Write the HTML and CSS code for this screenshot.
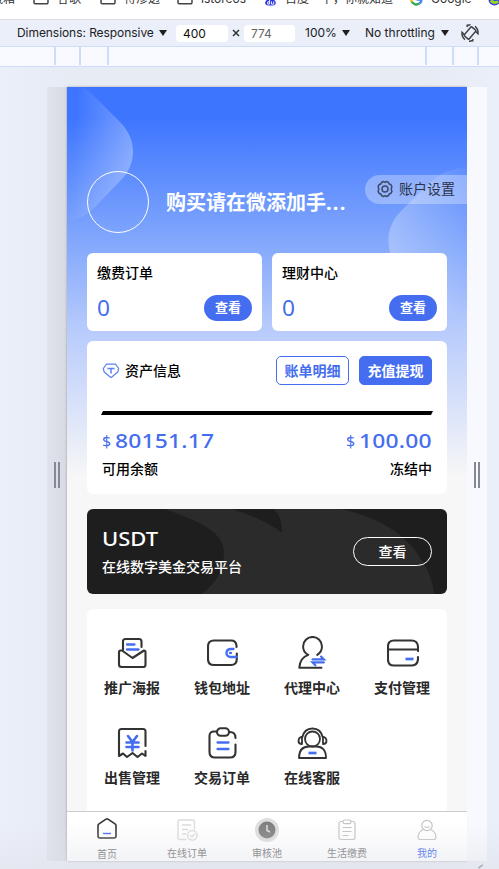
FILE: index.html
```html
<!DOCTYPE html>
<html lang="zh-CN">
<head>
<meta charset="utf-8">
<title>我的</title>
<link rel="stylesheet" href="styles.css">
</head>
<body>
<div class="bookmarks">
  <span class="bm bm-first">收藏箱</span>
  <svg class="folder" viewBox="0 0 16 14"><path d="M1 2.500a1.500 1.500 0 0 1 1.500-1.500H6l2 2h5.500A1.500 1.500 0 0 1 15 4.500V11.500A1.200 1.200 0 0 1 13.800 12.700H2.200A1.200 1.200 0 0 1 1 11.500z"/></svg>
  <span class="bm bm-a">谷歌</span>
  <svg class="folder" viewBox="0 0 16 14"><path d="M1 2.500a1.500 1.500 0 0 1 1.500-1.500H6l2 2h5.500A1.500 1.500 0 0 1 15 4.500V11.500A1.200 1.200 0 0 1 13.800 12.700H2.200A1.200 1.200 0 0 1 1 11.500z"/></svg>
  <span class="bm bm-b">待渗透</span>
  <svg class="folder" viewBox="0 0 16 14"><path d="M1 2.500a1.500 1.500 0 0 1 1.500-1.500H6l2 2h5.500A1.500 1.500 0 0 1 15 4.500V11.500A1.200 1.200 0 0 1 13.800 12.700H2.200A1.200 1.200 0 0 1 1 11.500z"/></svg>
  <span class="bm bm-c">istoreos</span>
  <svg class="fav" viewBox="0 0 14 14"><path d="M7 4c2 0 2.500 2 4 3.500s2 2.500 1.500 4S10 13.500 7 13.500 2 13 1.500 11.500 1.500 9 3 7.500 5 4 7 4z" fill="#2932e1"/><path d="M6 7.500v4.500H4V9.500h2M8 9v3h2.500V9" fill="none" stroke="#fff"/></svg>
  <span class="bm bm-d">百度一下，你就知道</span>
  <svg class="fav" viewBox="0 0 14 14"><g fill="none" stroke-width="2.600"><path d="M2 4.500a5.200 5.200 0 0 0 0 5" stroke="#fbbc05"/><path d="M2 9.400a5.500 5.500 0 0 0 8 2" stroke="#34a853"/><path d="M10 11.400A5 5 0 0 0 12.300 7H7" stroke="#4285f4"/><path d="M2 4.600a5.500 5.500 0 0 1 8-2" stroke="#ea4335"/></g></svg>
  <span class="bm bm-e">Google</span>
  <svg class="fav" viewBox="0 0 14 14"><circle cx="7" cy="7" r="6.500" fill="#4a35e8"/><path d="M3 8q4 4 8 1" stroke="#8be01e" stroke-width="3" fill="none"/></svg>
</div>
<div class="toolbar">
  <span class="dim">Dimensions: Responsive</span><i class="tri"></i>
  <span class="field">400</span>
  <svg class="times" viewBox="0 0 8 8"><path d="M1 1l6 6M7 1l-6 6"/></svg>
  <span class="field field-h">774</span>
  <span class="pct">100%</span><i class="tri"></i>
  <span class="thr">No throttling</span><i class="tri"></i>
  <svg class="rotate" viewBox="0 0 20 20"><g fill="none" stroke="#3c4043" stroke-width="1.500"><rect x="6.800" y="4.200" width="6.400" height="11.600" rx="1" transform="rotate(40 10 10)"/><path d="M7.600 2.500A8 8 0 0 1 10.500 1.800M7.500 1.500l-.5 2.500M15 3.400a8.300 8.300 0 0 1 3 7.200l-2.200-2M12.500 17.500a8 8 0 0 1-3.500.7M12.500 18.500l.5-2.500M5 16.600a8.300 8.300 0 0 1-3-7.200l2.200 2"/></g></svg>
</div>
<div class="ruler"><i></i><i></i><i></i><i></i><i></i><i></i></div>
<div class="stage">
  <div class="grip grip-left"><i></i><i></i></div>
  <main class="device">
    <div class="screen">
      <svg class="shapes" viewBox="0 0 400 360">
        <defs>
          <linearGradient id="ga" x1="0" y1=".35" x2="1" y2=".5"><stop offset=".1" stop-color="#fff" stop-opacity="0"/><stop offset="1" stop-color="#fff" stop-opacity=".32"/></linearGradient>
          <linearGradient id="gb" x1="0" y1=".4" x2="1" y2=".6"><stop offset="0" stop-color="#fff" stop-opacity=".28"/><stop offset="1" stop-color="#fff" stop-opacity="0"/></linearGradient>
        </defs>
        <path d="M0 0H16Q20 2 25 7L54 36C70 53 70 77 54 93L28 120Q17 132 0 134z" fill="url(#ga)"/>
        <path d="M400 80Q378 82 365 94L335 123C315 142 318 170 338 190L400 240z" fill="url(#gb)"/>
      </svg>
      <header class="profile">
        <div class="avatar"></div>
        <h1>购买请在微添加手<span class="dots">...</span></h1>
        <div class="settings">
          <svg viewBox="0 0 18 18"><g fill="none" stroke="#3e4a68" stroke-width="1.500"><path d="M5.700 2.300 7.500 1.500 9 2.300l1.500-.8 1.800.8 1 1.700 1.700.8.900 1.800-.7 2.400.7 2.400-.9 1.800-1.700.8-1 1.700-1.800.8-1.500-.8-1.500.8-1.800-.8-1-1.700-1.700-.8-.9-1.800.7-2.400-.7-2.400.9-1.800 1.700-.8z" stroke-linejoin="round"/><circle cx="9" cy="9" r="3"/></g></svg>
          <span>账户设置</span>
        </div>
      </header>
      <section class="duo">
        <div class="card mini"><h2>缴费订单</h2><div class="line"><b class="zero">0</b><span class="pill">查看</span></div></div>
        <div class="card mini"><h2>理财中心</h2><div class="line"><b class="zero">0</b><span class="pill">查看</span></div></div>
      </section>
      <section class="card assets">
        <div class="assets-top">
          <svg viewBox="0 0 18 16"><g fill="none" stroke="#5b80f0" stroke-width="1.200" stroke-linejoin="round"><path d="M4.500 1.200h9L16.700 5.500 15.800 9 9.500 14.300h-1L2.200 9 1.300 5.500z"/><path d="M5.500 5.500h7M9 5.500v5" stroke-width="1.500"/></g></svg>
          <span class="assets-name">资产信息</span>
          <span class="btn ghost">账单明细</span>
          <span class="btn solid">充值提现</span>
        </div>
        <div class="rule"></div>
        <div class="sums"><p><small>$</small><b>80151.17</b></p><p><small>$</small><b class="right">100.00</b></p></div>
        <div class="labels"><span>可用余额</span><span>冻结中</span></div>
      </section>
      <section class="usdt">
        <svg class="usdt-bg" viewBox="0 0 360 85"><path d="M78 0C110 12 137 22 137 43C137 62 128 76 114 85H347C346 72 340 57 333 49C319 25 293 9 254 0H187Q196 10 195 24Q177 10 145 0z" fill="#2b2b2b"/></svg>
        <div class="usdt-text"><strong>USDT</strong><span>在线数字美金交易平台</span></div>
        <span class="outline">查看</span>
      </section>
      <section class="card grid">
        <div class="item"><svg viewBox="0 0 32 32"><g class="k"><path d="M6 13V4.500Q6 2 8.500 2H22Q24.500 2 24.500 4.500V10"/><path d="M5 13.500H3.500Q2 13.500 2 15v12.500Q2 30 4.500 30h22Q28.500 30 28.500 27.500V15q0-1.500-1.500-1.500L15.500 21 5 13.500"/></g><path class="b" d="M10 7.500h7.500M10 12.500h11.500"/></svg><span>推广海报</span></div>
        <div class="item"><svg viewBox="0 0 32 32"><path class="k" d="M29.500 10V8.500Q29 3.500 24 3.500H7Q1 3.500 1 9.500v12.500Q1 28 7 28H24Q29.800 28 29.800 22V16.500"/><path class="b" d="M26.500 12h-3Q19.500 12.500 19.500 16t4 4h6.500M23 16h1"/></svg><span>钱包地址</span></div>
        <div class="item"><svg viewBox="0 0 32 36"><path class="k" d="M20.500 20Q25.500 16.500 25.500 11A10 10 0 0 0 5.500 11Q5.500 17 11 20C5 22 2 27 1.500 33.500H25"/><path class="b" d="M15.500 24.800H27.500L24.500 21.800M27.500 28H15.500L18.500 31"/></svg><span>代理中心</span></div>
        <div class="item"><svg viewBox="0 0 32 32"><path class="k" d="M31 14V9.500Q30.500 3.500 24.500 3.500H7Q1 3.500 1 9.500v13Q1 28.500 7 28.500H25Q31 28 31 21.500V20M1 12.500H31"/><path class="b thick" d="M18.500 22h8"/></svg><span>支付管理</span></div>
        <div class="item"><svg viewBox="0 0 32 32"><path class="k" d="M28.500 19V4.500Q28.500 2 26 2H4.500Q2 2 2 4.500V29L6 26.500 10 30l5.500-4 5 4 4.500-3.500 3.500 2.500V24"/><path class="b yen" d="M11 9l4.500 6L20 9M9.500 15.500h12M9.500 20h12M15.500 15v8.500"/></svg><span>出售管理</span></div>
        <div class="item"><svg viewBox="0 0 32 32"><g class="k"><rect x="10" y="1.300" width="12" height="7.500" rx="3.700"/><path d="M10 4.500H7Q2.500 4.500 2.500 9v16Q2.500 30.500 8 30.500H23Q28.500 30.500 28.500 25V17.500M22 5Q28.500 4.500 28.500 11"/></g><path class="b" d="M10.500 15.500h11M10.500 22h11"/></svg><span>交易订单</span></div>
        <div class="item"><svg viewBox="0 0 32 32"><g class="k thin"><circle cx="15.500" cy="12" r="7.500"/><path d="M5 11Q7 1.500 15.500 1.500T26 11M5 10H4Q1.500 11 1.500 14t3.500 3zM26 10h1q2.500 1 2.500 4T26 17zM2 31Q2 19.500 12 19.500h7Q29 19.500 29 31z"/></g><path class="b thick" d="M11.500 26h8"/></svg><span>在线客服</span></div>
      </section>
    </div>
    <nav class="tabs">
      <div class="tab home"><svg viewBox="0 0 24 24"><path d="M3 8.500Q3 7.500 4 6.800L11 2.200q1-.7 2 0l7 4.600q1 .7 1 1.700V19q0 2-2 2H5q-2 0-2-2z" fill="none" stroke="#333" stroke-width="1.600"/><path d="M8 16.500h8" stroke="#4169ee" stroke-width="1.400"/></svg><span>首页</span></div>
      <div class="tab"><svg viewBox="0 0 24 24"><g fill="none" stroke="#dcdcdc" stroke-width="1.400"><path d="M11.500 21.500H5q-2 0-2-2V4q0-2 2-2h12.500q2 0 2 2v7.500M7 7h9M7 11.500h6M7 16h4"/><circle cx="17.300" cy="17.300" r="4.800"/><path d="M15 17l2 2 3-3.500"/></g></svg><span>在线订单</span></div>
      <div class="tab"><svg viewBox="0 0 24 24"><circle cx="12" cy="12" r="12" fill="#dedede"/><circle cx="12" cy="12" r="8.500" fill="#808080"/><path d="M12 7v5.500l3 1.500" fill="none" stroke="#ddd" stroke-width="1.500"/></svg><span>审核池</span></div>
      <div class="tab"><svg viewBox="0 0 24 24"><g fill="none" stroke="#c4c4c4" stroke-width="1.200"><rect x="4" y="3.500" width="16" height="18" rx="2"/><rect x="8" y="2" width="8" height="3.700" rx="1.800" fill="#fff"/><path d="M7.500 9.500h9M7.500 13.500h9M7.500 17.500h6"/></g></svg><span>生活缴费</span></div>
      <div class="tab active"><svg viewBox="0 0 24 24"><g fill="none" stroke="#c4c4c4" stroke-width="1.200"><circle cx="12" cy="7.500" r="5.200"/><path d="M8.500 11.500Q4 13 3 18.500 3 21.500 5 21.500H19q2 0 2-3-1-5.500-5.500-7M9.500 8.500q2.500 2 5 0"/></g></svg><span>我的</span></div>
    </nav>
  </main>
  <div class="grip grip-right"><i></i><i></i></div>
  <svg class="corner" viewBox="0 0 8 6"><path d="M1 5L6 1" stroke="#888" stroke-width="2"/></svg>
</div>
</body>
</html>
```
FILE: styles.css
```css
* { box-sizing: border-box; }
body { margin: 0; width: 499px; height: 869px; overflow: hidden; display: flex; flex-direction: column; font-family: "Noto Sans", "Noto Sans CJK SC", sans-serif; color: #000; background: #ebeff9; }
h1, h2, p { margin: 0; }
svg { display: block; flex: none; }

.bookmarks { height: 20px; flex: none; display: flex; align-items: flex-start; overflow: hidden; background: #fff; border-bottom: 1px solid #dde0dc; font: 12px/16px Inter, "Noto Sans CJK SC", sans-serif; color: #333; }
.bm { flex: none; margin-top: -9px; white-space: nowrap; }
.bm-first { width: 54px; margin-left: -21px; }
.folder { width: 16px; height: 14px; margin-top: -9px; margin-right: 8px; fill: none; stroke: #444; stroke-width: 1.5; }
.bm-a { width: 43px; }
.bm-b { width: 53px; }
.bm-c { width: 63px; }
.bm-d { width: 125px; }
.bm-e { width: 57px; }
.fav { width: 13px; height: 13px; margin-top: -7px; margin-right: 8px; }

.toolbar { height: 26px; flex: none; display: flex; align-items: center; padding-left: 17px; background: #ebeff9; font: 12px/16px Inter, sans-serif; color: #202124; white-space: nowrap; }
.dim { width: 142px; letter-spacing: -.06px; }
.tri { width: 8px; height: 6px; background: #1f1f1f; clip-path: polygon(0 0, 100% 0, 50% 100%); flex: none; }
.field { width: 52px; height: 17px; flex: none; line-height: 17px; margin-left: 9px; padding-left: 7px; background: #fff; border-radius: 4px; color: #111; }
.field-h { width: 51px; margin-left: 4px; color: #666; }
.times { width: 8px; height: 8px; margin-left: 4px; stroke: #333; stroke-width: 1.5; }
.pct { width: 37px; margin-left: 10px; }
.thr { width: 76px; margin-left: 15px; }
.rotate { width: 20px; height: 20px; margin-left: 11px; }

.ruler { height: 21px; flex: none; display: grid; grid-template-columns: 54px 25px 28px 318px 27px 25px 1fr; background: #f8faff; border-top: 1px solid #cddcfb; border-bottom: 1px solid #cddcfb; }
.ruler i { height: 18px; border-right: 2px solid #cddcfb; margin-right: -2px; }

.stage { position: relative; flex: 1; display: grid; grid-template-columns: 20px 400px 20px; grid-template-rows: 774px; padding: 20px 12px 0 47px; background: linear-gradient(90deg, #ebeff9 0, #e7ebf4 70px, #e7ebf4 430px, #ebeff9 499px); }
.stage::after { content: ""; position: absolute; left: 0; right: 0; bottom: 0; height: 46px; background: linear-gradient(rgba(225,227,235,0), rgba(222,224,232,.45)); pointer-events: none; }
.grip { display: flex; justify-content: center; align-items: center; gap: 2px; }
.grip i { width: 2px; height: 26px; background: #858994; margin-top: 2px; }
.grip-left { background: linear-gradient(90deg, #dfe3ec, #d7dae2); }
.grip-right { background: #f7f9fe; }
.device { display: flex; flex-direction: column; box-shadow: 0 0 2px rgba(90,80,60,.5); background: #f7f7f7; overflow: hidden; height: 774px; }
.screen { position: relative; height: 724px; flex: none; overflow: hidden; padding: 84px 20px 0; background: linear-gradient(#3d75ff 0, #3d75ff 30px, #83a8fc 156px, #b6cafc 240px, #f7f7f7 390px); }
.shapes { position: absolute; left: 0; top: 0; width: 400px; height: 360px; }
.profile { position: relative; display: flex; height: 62px; margin-bottom: 20px; }
.avatar { width: 62px; height: 62px; border: 1px solid #fff; border-radius: 50%; flex: none; }
h1 { width: 198px; padding-left: 17px; font-size: 20px; line-height: 30px; margin-top: 17px; color: #fff; font-weight: 700; white-space: nowrap; }
.dots { letter-spacing: 1.2px; }
.settings { height: 29px; margin-top: 4px; margin-left: 18px; margin-right: -20px; width: 102px; flex: none; padding-left: 11px; display: flex; align-items: center; gap: 5px; background: rgba(255,255,255,.3); border-radius: 15px 0 0 15px; font-size: 14px; line-height: 20px; color: #29334d; white-space: nowrap; }
.settings svg { width: 18px; height: 18px; margin-top: -2px; }
.settings span { position: relative; top: -1px; }

.card { position: relative; background: #fff; border-radius: 6px; }
.duo { display: grid; grid-template-columns: 1fr 1fr; gap: 10px; margin-bottom: 10px; }
.mini { height: 78px; padding: 10px 10px 0; }
h2 { font-size: 14px; line-height: 20px; font-weight: 500; }
.line { display: flex; justify-content: space-between; align-items: center; height: 26px; margin-top: 12px; }
.zero { font-size: 21px; line-height: 26px; font-weight: 400; color: #446def; transform: scaleX(1.08); transform-origin: left; }
.pill { width: 48px; height: 26px; border-radius: 13px; background: #446def; color: #fff; font-size: 13px; line-height: 25px; font-weight: 700; text-align: center; }

.assets { height: 153px; padding: 15px 15px 0; margin-bottom: 15px; }
.assets-top { display: flex; align-items: center; height: 29px; }
.assets-top svg { width: 18px; height: 16px; margin-right: 5px; }
.assets-name { flex: 1; font-size: 14px; line-height: 20px; font-weight: 500; }
.btn { width: 73px; height: 29px; border-radius: 5px; border: 1px solid #446def; color: #446def; font-size: 14px; line-height: 27px; text-align: center; font-weight: 700; }
.solid { margin-left: 10px; background: #446def; color: #fff; }
.rule { height: 4px; margin: 26px 0 0 -1px; width: 332px; background: #000; clip-path: polygon(2px 0, 100% 0, 330px 100%, 0 100%); }
.sums { display: flex; justify-content: space-between; height: 28px; margin-top: 12px; color: #446def; }
.sums p { display: flex; align-items: center; gap: 4px; height: 28px; }
.sums small { font-size: 16px; line-height: 28px; }
.sums b { font-size: 20px; line-height: 28px; font-weight: 500; letter-spacing: .2px; transform: scaleX(1.14); transform-origin: left; }
.sums .right { transform-origin: right; margin-left: 9px; }
.labels { display: flex; justify-content: space-between; font-size: 14px; line-height: 20px; margin-top: 4px; font-weight: 500; }

.usdt { position: relative; height: 85px; margin-bottom: 15px; border-radius: 6px; overflow: hidden; background: #1e1e1e; display: flex; justify-content: space-between; align-items: center; padding: 0 15px; color: #fff; }
.usdt-bg { position: absolute; left: 0; top: 0; width: 360px; height: 85px; }
.usdt-text { position: relative; display: flex; flex-direction: column; gap: 6px; }
.usdt-text strong { font: 500 20px/24px "Noto Sans", sans-serif; transform: scaleX(1.1); transform-origin: left; }
.usdt-text span { font-size: 14px; line-height: 20px; font-weight: 500; }
.outline { position: relative; width: 79px; height: 29px; border: 1px solid #fff; border-radius: 15px; text-align: center; font-size: 14px; line-height: 27px; font-weight: 500; }

.grid { height: 240px; padding-top: 27px; display: grid; grid-template-columns: repeat(4, 90px); grid-template-rows: 90px 90px; }
.item { display: flex; flex-direction: column; align-items: center; color: #292929; font-size: 14px; line-height: 20px; font-weight: 700; }
.item svg { width: 32px; height: 34px; margin: 0 0 8px 2px; }
.k { fill: none; stroke: #333; stroke-width: 2.1; stroke-linejoin: round; stroke-linecap: round; }
.b { fill: none; stroke: #446def; stroke-width: 2.3; stroke-linecap: round; }
.thin { stroke-width: 1.8; }
.thick { stroke-width: 2.7; stroke-linecap: butt; }
.yen { stroke-width: 2.6; }

.tabs { height: 50px; display: grid; grid-template-columns: repeat(5, 1fr); background: #fff; border-top: 1px solid #ccc; flex: none; }
.tab { display: flex; flex-direction: column; align-items: center; padding-top: 6px; font-size: 10px; line-height: 14px; color: #707070; }
.tab svg { width: 24px; height: 24px; margin-bottom: 4px; }
.home svg { margin-top: -1px; margin-bottom: 6px; }
.active { color: #355fee; }
.corner { position: absolute; left: 477px; bottom: 0; width: 8px; height: 5px; }
```
